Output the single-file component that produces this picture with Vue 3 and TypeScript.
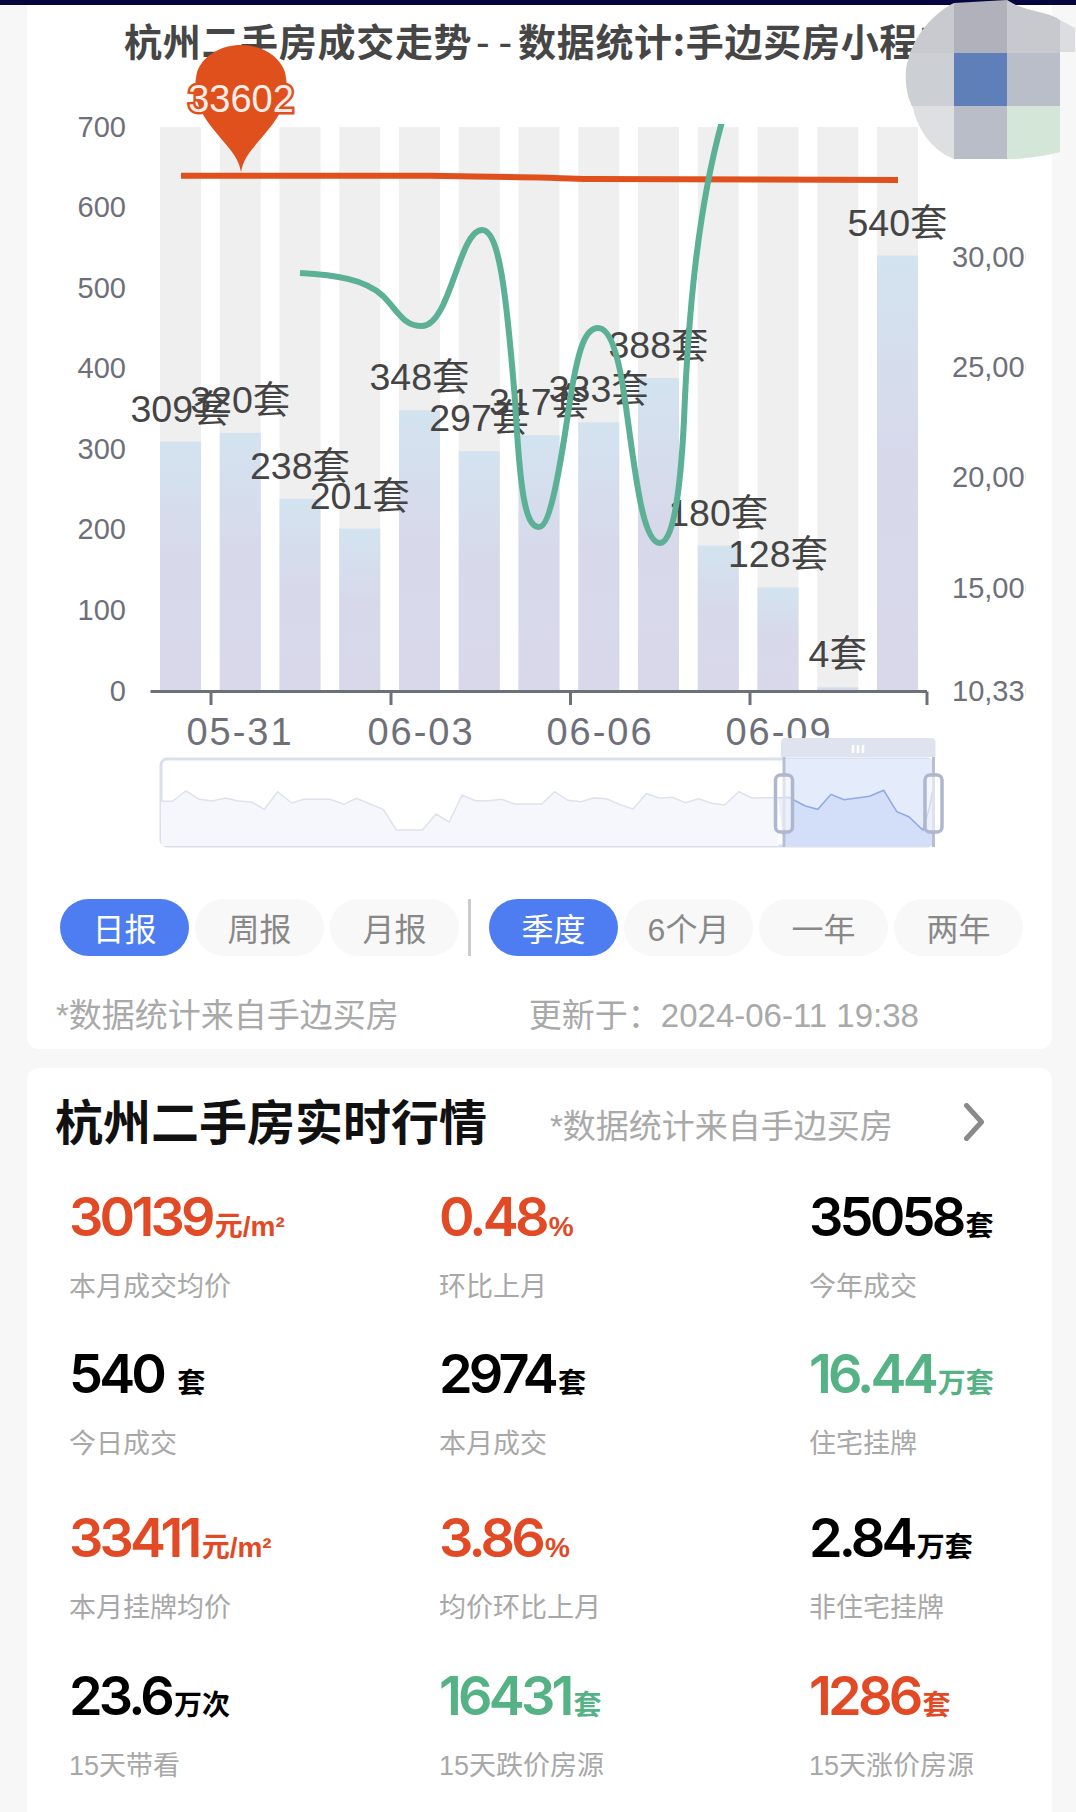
<script setup lang="ts">
interface Stat { value: string; unit: string; label: string; tone: string; spaced?: boolean }

const stats: Stat[] = [
  { value: '30139', unit: '元/m²', label: '本月成交均价', tone: 'red' },
  { value: '0.48', unit: '%', label: '环比上月', tone: 'red' },
  { value: '35058', unit: '套', label: '今年成交', tone: 'black' },
  { value: '540', unit: '套', label: '今日成交', tone: 'black', spaced: true },
  { value: '2974', unit: '套', label: '本月成交', tone: 'black' },
  { value: '16.44', unit: '万套', label: '住宅挂牌', tone: 'green' },
  { value: '33411', unit: '元/m²', label: '本月挂牌均价', tone: 'red' },
  { value: '3.86', unit: '%', label: '均价环比上月', tone: 'red' },
  { value: '2.84', unit: '万套', label: '非住宅挂牌', tone: 'black' },
  { value: '23.6', unit: '万次', label: '15天带看', tone: 'black' },
  { value: '16431', unit: '套', label: '15天跌价房源', tone: 'green' },
  { value: '1286', unit: '套', label: '15天涨价房源', tone: 'red' },
]

const reports = [
  { text: '日报', on: true }, { text: '周报', on: false }, { text: '月报', on: false },
]
const ranges = [
  { text: '季度', on: true }, { text: '6个月', on: false }, { text: '一年', on: false }, { text: '两年', on: false },
]

const BASE = 690.5
const UNIT = 0.8054
const values = [309, 320, 238, 201, 348, 297, 317, 333, 388, 180, 128, 4, 540]
const bars = values.map((v, i) => {
  const x = 160 + i * 59.75
  const top = BASE - v * UNIT
  return { v, x, cx: x + 20.5, top, h: v * UNIT }
})

const leftTicks = [0, 100, 200, 300, 400, 500, 600, 700].map((v) => ({ v, y: BASE - v * UNIT }))
const rightTicks = [
  { t: '30,000', y: 257 }, { t: '25,000', y: 367 }, { t: '20,000', y: 477 },
  { t: '15,000', y: 588 }, { t: '10,330', y: 691 },
]
const xLabels = [{ t: '05-31', x: 240 }, { t: '06-03', x: 421 }, { t: '06-06', x: 600 }, { t: '06-09', x: 779 }]
const xTicks = [211, 391, 570.5, 750, 927]

const spark: [number, number][] = [
  [40,214],[62,214],[88,183],[113,208],[138,213],[163,204],[188,213],[213,216],[238,238],[263,185],[290,219],
  [313,208],[363,208],[390,223],[414,205],[440,222],[465,238],[490,300],[540,300],[566,252],[591,276],[616,195],
  [641,212],[666,212],[691,208],[716,222],[768,222],[793,185],[818,211],[843,215],[868,203],[893,207],[918,224],
  [943,237],[968,191],[993,204],[1018,202],[1043,218],[1068,206],[1093,220],[1118,225],[1145,185],[1170,204],
  [1195,203],[1220,203],[1240,202],[1250,210],[1272,228],[1296,238],[1321,193],[1346,209],[1371,204],[1395,199],
  [1422,181],[1447,245],[1470,260],[1497,300],[1510,230],[1518,160],
]
const sparkPts = spark.map(([x, y]) => [140 + x / 1.912, 730 + y / 3] as [number, number])
const toLine = (p: [number, number][]) => p.map(([x, y]) => `${x.toFixed(1)} ${y.toFixed(1)}`).join(' L')
const splitAt = sparkPts.findIndex(([x]) => x >= 784)
const sparkOff = sparkPts.slice(0, splitAt)
const sparkOn = sparkPts.slice(splitAt - 1)
const sparkLine = 'M' + toLine(sparkOff)
const sparkArea = `M${toLine(sparkOff)} L${sparkOff[sparkOff.length - 1][0].toFixed(1)} 846 L161 846 Z`
const sparkOnLine = 'M' + toLine(sparkOn)
const sparkOnArea = `M${toLine(sparkOn)} L${sparkOn[sparkOn.length - 1][0].toFixed(1)} 846 L784 846 Z`
</script>

<template>
  <div class="page">
    <div class="topbar"></div>

    <section class="card chart-card">
      <svg class="chart" viewBox="27 5 1025 880" width="1025" height="880">
        <defs>
          <linearGradient id="barFill" x1="0" y1="0" x2="0" y2="1">
            <stop offset="0" stop-color="#d3e3f0" />
            <stop offset="0.45" stop-color="#d7d9eb" />
            <stop offset="1" stop-color="#d8d8ea" />
          </linearGradient>
          <clipPath id="plotClip"><rect x="140" y="124" width="800" height="570" /></clipPath>
          <clipPath id="rightAxis"><rect x="940" y="240" width="85.5" height="470" /></clipPath>
        </defs>

        <text class="title" x="124" y="56">杭州二手房成交走势<tspan class="dashes" x="476">--</tspan><tspan x="518">数据统计:手边买房小程序</tspan></text>

        <text v-for="t in leftTicks" :key="t.v" class="axis-label" x="126" :y="t.y + 10" text-anchor="end">{{ t.v }}</text>
        <g clip-path="url(#rightAxis)">
          <text v-for="t in rightTicks" :key="t.t" class="axis-label" x="952" :y="t.y + 10">{{ t.t }}</text>
        </g>

        <g v-for="b in bars" :key="b.x">
          <rect :x="b.x" y="127" width="41" :height="BASE - 127" fill="#efefef" />
          <rect :x="b.x" :y="b.top" width="41" :height="b.h" fill="url(#barFill)" />
        </g>

        <path d="M150.5 691.5H927" class="axis-line" />
        <path v-for="x in xTicks" :key="x" :d="`M${x} 691.5V705`" class="axis-line" />
        <text v-for="l in xLabels" :key="l.t" class="x-label" :x="l.x" y="745" text-anchor="middle">{{ l.t }}</text>

        <text v-for="b in bars" :key="'l' + b.x" class="bar-label" :x="b.cx" :y="b.top - 20" text-anchor="middle">{{ b.v }}套</text>

        <path class="line-orange" d="M181 175.7 L430 175.7 C460 176 490 177 520 177.300 C550 177.600 565 178.600 590 179 L898 180" />
        <path class="line-green" clip-path="url(#plotClip)"
          d="M300 273 C335 275 365 279 383 296 C398 311 403 326 422 326 C450 326 459 230 482 230 C499 230 506 290 515 400 C520 490 525 527 539 527 C550 527 560 470 570 400 C578 350 585 328 598 328 C612 328 620 365 625 400 C635 470 642 543 660 543 C672 543 680 500 684 420 C688 320 697 210 723 118" />

        <path class="pin" d="M241 172 C238 155 228 148 210 125 C195 105 193 92 197 72 C203 55 222 45 241 45 C260 45 279 55 285 72 C289 92 287 105 272 125 C254 148 244 155 241 172Z" />
        <text class="pin-label" x="241" y="112" text-anchor="middle">33602</text>

        <!-- data zoom -->
        <rect class="zoom-frame" x="161" y="759" width="772" height="87" rx="6" />
        <path :d="sparkArea" fill="#f5f7fc" />
        <path :d="sparkLine" class="spark-off" />
        <rect x="784" y="759" width="149" height="87" fill="#e4ebfb" />
        <path :d="sparkOnArea" fill="#d3def8" />
        <path :d="sparkOnLine" class="spark-on" />
        <path d="M784 757V847M933.500 757V847" class="zoom-edge" />
        <path d="M781 757V742a4 4 0 0 1 4-4H931.500a4 4 0 0 1 4 4V757Z" fill="#dfe3ef" />
        <path d="M853 745V753M858 745V753M863 745V753" class="grip" />
        <rect class="zoom-handle" x="775.500" y="775" width="17" height="57" rx="5" />
        <rect class="zoom-handle" x="925" y="775" width="17" height="57" rx="5" />
      </svg>

      <div class="filters">
        <button v-for="r in reports" :key="r.text" type="button" class="pill" :class="{ on: r.on }">{{ r.text }}</button>
        <span class="divider"></span>
        <button v-for="r in ranges" :key="r.text" type="button" class="pill" :class="{ on: r.on }">{{ r.text }}</button>
      </div>

      <div class="notes">
        <span class="note">*数据统计来自手边买房</span>
        <span class="note updated">更新于：2024-06-11 19:38</span>
      </div>
    </section>

    <section class="card stats-card">
      <header class="stats-head">
        <h2>杭州二手房实时行情</h2>
        <span class="note head-note">*数据统计来自手边买房</span>
        <svg class="chevron" viewBox="0 0 20 38" width="20" height="38">
          <path d="M2.500 2.500L17.500 19L2.500 35.500" />
        </svg>
      </header>

      <div class="grid">
        <div v-for="s in stats" :key="s.label" class="cell">
          <div class="figure" :class="s.tone">
            <span class="num">{{ s.value }}</span><span class="unit" :class="{ spaced: s.spaced }">{{ s.unit }}</span>
          </div>
          <div class="label">{{ s.label }}</div>
        </div>
      </div>
    </section>

    <svg class="mosaic" viewBox="900 0 176 165" width="176" height="165">
      <defs>
        <clipPath id="blob">
          <path d="M954 3 L1007 0 L1014 4 C1030 12 1050 12 1060 20 L1075 28 L1075 52 L1060 52 L1060 152 C1045 156 1025 159 1007 159 L954 159 C935 152 918 132 913 108 C905 95 904 70 908 60 C914 35 935 12 954 3Z" />
        </clipPath>
      </defs>
      <g clip-path="url(#blob)">
        <rect x="900" y="0" width="54" height="53" fill="#c9cacf" />
        <rect x="954" y="0" width="53" height="53" fill="#b0b1ba" />
        <rect x="1007" y="0" width="53" height="53" fill="#c8c9ce" />
        <rect x="1060" y="0" width="16" height="53" fill="#dcdde0" />
        <rect x="900" y="53" width="54" height="53" fill="#ccd0d4" />
        <rect x="954" y="53" width="53" height="53" fill="#5f7fb8" />
        <rect x="1007" y="53" width="53" height="53" fill="#b9bec9" />
        <rect x="900" y="106" width="54" height="53" fill="#dedfe0" />
        <rect x="954" y="106" width="53" height="53" fill="#b9bdc7" />
        <rect x="1007" y="106" width="53" height="53" fill="#d3e6d7" />
      </g>
    </svg>
  </div>
</template>

<style>
html, body { margin: 0; background: #f7f7f7; }
</style>

<style scoped>
.page {
  position: relative;
  width: 1076px;
  height: 1812px;
  overflow: hidden;
  background: #f7f7f7;
  font-family: "Liberation Sans", "Noto Sans CJK SC", sans-serif;
}
.topbar { height: 5px; background: #05053f; }
.card { margin: 0 24px 0 27px; background: #fff; border-radius: 12px; }
.chart-card { height: 1044px; border-radius: 0 0 12px 12px; }
.chart { display: block; }

.title { font-size: 38px; font-weight: 700; fill: #464646; letter-spacing: 0.7px; font-family: "Noto Sans CJK SC", sans-serif; }
.dashes { letter-spacing: 9px; font-weight: 500; }
.axis-label { font-size: 29px; fill: #6e7079; }
.x-label { font-size: 38px; fill: #6e7079; letter-spacing: 2px; }
.bar-label { font-size: 37.500px; fill: #444; }
.axis-line { stroke: #6e7079; stroke-width: 3; fill: none; }
.line-orange { stroke: #e0501c; stroke-width: 6; fill: none; }
.line-green { stroke: #5bb095; stroke-width: 6; fill: none; }
.pin { fill: #e0501c; }
.pin-label {
  font-size: 38px;
  fill: #fbeee8;
  stroke: #e0501c;
  stroke-width: 5px;
  paint-order: stroke;
}
.zoom-frame { fill: #fff; stroke: #d9dfec; stroke-width: 3; }
.spark-off { fill: none; stroke: #dfe2ec; stroke-width: 1.500; }
.spark-on { fill: none; stroke: #8fa9e8; stroke-width: 1.500; }
.zoom-edge { stroke: #b8bfd2; stroke-width: 3; fill: none; }
.grip { stroke: #fff; stroke-width: 2.500; fill: none; }
.zoom-handle { fill: rgba(255, 255, 255, 0.55); stroke: #aeb7ce; stroke-width: 3.500; }

.filters {
  display: flex;
  align-items: stretch;
  gap: 6px;
  height: 57px;
  margin-top: 14px;
  padding-left: 33px;
}
.pill {
  width: 129px;
  padding: 4px 0 0;
  border: 0;
  border-radius: 29px;
  background: #f8f8f8;
  color: #888;
  font-family: inherit;
  font-size: 32px;
  line-height: 50px;
}
.pill.on { background: #4d7df0; color: #fff; }
.divider { width: 3px; margin: 0 12px 0 3px; background: #ccc; }

.notes {
  display: flex;
  height: 44px;
  margin-top: 38px;
  padding-left: 29px;
  line-height: 44px;
}
.note { font-size: 33px; color: #a9a9a9; white-space: nowrap; }
.updated { margin-left: 130px; }

.stats-card { height: 760px; margin-top: 19px; }
.stats-head {
  display: flex;
  align-items: center;
  height: 108px;
  padding-left: 28px;
}
.stats-head h2 {
  width: 432px;
  margin: 0 0 4px;
  font-size: 48px;
  font-weight: 700;
  line-height: 1.2;
  color: #111;
  white-space: nowrap;
  font-family: "Noto Sans CJK SC", sans-serif;
}
.head-note { margin: 4px 0 0 63px; }
.chevron { margin-left: 71px; }
.chevron path { fill: none; stroke: #8a8a8a; stroke-width: 5; stroke-linecap: round; stroke-linejoin: round; }

.grid {
  display: grid;
  grid-template-columns: repeat(3, 370px);
  grid-template-rows: 157px 164px 158px 158px;
  margin-top: 11px;
  padding-left: 42px;
}
.figure { height: 60px; line-height: 60px; white-space: nowrap; }
.num {
  font-family: Inter, "Liberation Sans", sans-serif;
  font-size: 54px;
  font-weight: 600;
  letter-spacing: -3.800px;
}
.unit { font-size: 28px; font-weight: 700; margin-left: 3px; }
.unit.spaced { margin-left: 14px; }
.red { color: #e24a26; }
.green { color: #55b285; }
.black { color: #000; }
.label {
  margin-top: 22px;
  font-size: 27px;
  line-height: 36px;
  color: #a8a8a8;
  white-space: nowrap;
}
.mosaic { position: absolute; top: 0; left: 900px; }
</style>
